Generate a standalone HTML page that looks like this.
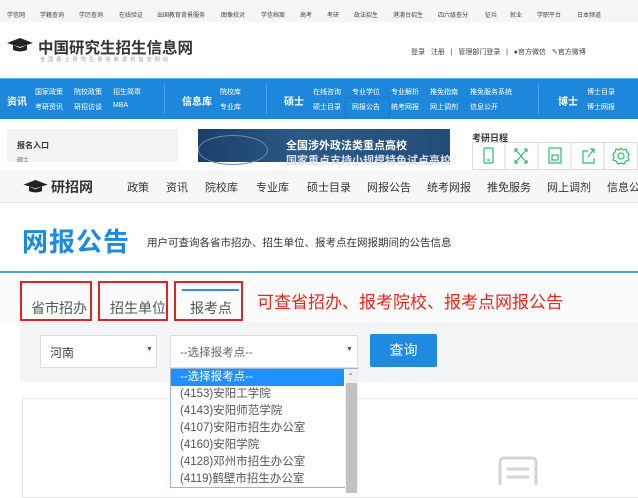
<!DOCTYPE html>
<html><head><meta charset="utf-8"><style>
*{margin:0;padding:0;box-sizing:border-box}
body{width:638px;height:484px;overflow:hidden;background:#fff;font-family:"Liberation Sans","Noto Sans CJK SC",sans-serif;position:relative}
.a{position:absolute;white-space:nowrap}
.t{font-size:6px;color:#444;top:10px}
.bw{color:#fff;font-size:7px}
.cat{color:#fff;font-size:10px;font-weight:bold}
.m{font-size:11px;color:#333;top:179px}
.opt{position:absolute;left:171px;width:173px;height:17px;font-size:11.5px;color:#555;padding-left:9px;line-height:17px}
</style></head><body>
<!-- top strip -->
<div class="a" style="left:0;top:0;width:638px;height:22px;background:#f6f6f6"></div>
<span class="a t" style="left:7px">学信网</span><span class="a t" style="left:40px">学籍查询</span><span class="a t" style="left:79px">学历查询</span><span class="a t" style="left:119px">在线验证</span><span class="a t" style="left:157px">出国教育背景服务</span><span class="a t" style="left:221px">图像校对</span><span class="a t" style="left:261px">学信档案</span><span class="a t" style="left:300px">高考</span><span class="a t" style="left:327px">考研</span><span class="a t" style="left:354px">政法招生</span><span class="a t" style="left:393px">港澳台招生</span><span class="a t" style="left:438px">四六级查分</span><span class="a t" style="left:485px">征兵</span><span class="a t" style="left:510px">就业</span><span class="a t" style="left:537px">学职平台</span><span class="a t" style="left:577px">日本频道</span>
<!-- logo -->
<svg class="a" style="left:7px;top:38px" width="26" height="14" viewBox="0 0 26 14"><path d="M0 5 L13 0 L26 5 L13 9Z" fill="#222"/><path d="M6 7 L6 12 Q13 15 20 12 L20 7 L13 10Z" fill="#222"/></svg>
<span class="a" style="left:38px;top:36px;font-size:15.5px;font-weight:bold;color:#333">中国研究生招生信息网</span>
<span class="a" style="left:40px;top:56px;font-size:5px;color:#999;letter-spacing:3.2px">全国硕士研究生报名和调剂指定网站</span>
<span class="a" style="left:411px;top:47px;font-size:7px;color:#444">登录&nbsp;&nbsp;&nbsp;注册&nbsp;&nbsp;&nbsp;|&nbsp;&nbsp;&nbsp;管理部门登录&nbsp;&nbsp;&nbsp;|&nbsp;&nbsp;&nbsp;●官方微信&nbsp;&nbsp;&nbsp;✎官方微博</span>
<!-- blue bar -->
<div class="a" style="left:0;top:78px;width:638px;height:41px;background:#1d87dc;border-top:1px solid #5ab0ee"></div>
<span class="a cat" style="left:7px;top:93px">资讯</span>
<span class="a bw" style="left:35px;top:87px">国家政策</span><span class="a bw" style="left:74px;top:87px">院校政策</span><span class="a bw" style="left:113px;top:87px">招生简章</span>
<span class="a bw" style="left:35px;top:102px">考研资讯</span><span class="a bw" style="left:74px;top:102px">研招访谈</span><span class="a bw" style="left:113px;top:102px">MBA</span>
<div class="a" style="left:164px;top:84px;width:1px;height:30px;background:#4aa0e4"></div>
<span class="a cat" style="left:182px;top:93px">信息库</span>
<span class="a bw" style="left:220px;top:87px">院校库</span><span class="a bw" style="left:220px;top:102px">专业库</span>
<div class="a" style="left:266px;top:84px;width:1px;height:30px;background:#4aa0e4"></div>
<span class="a cat" style="left:284px;top:93px">硕士</span>
<span class="a bw" style="left:313px;top:87px">在线咨询</span><span class="a bw" style="left:352px;top:87px">专业学位</span><span class="a bw" style="left:391px;top:87px">专业解析</span><span class="a bw" style="left:430px;top:87px">推免指南</span><span class="a bw" style="left:470px;top:87px">推免服务系统</span>
<span class="a bw" style="left:313px;top:102px">硕士目录</span><span class="a bw" style="left:352px;top:102px">网报公告</span><span class="a bw" style="left:391px;top:102px">统考网报</span><span class="a bw" style="left:430px;top:102px">网上调剂</span><span class="a bw" style="left:470px;top:102px">信息公开</span>
<div class="a" style="left:345px;top:97px;width:45px;height:21px;border:1.5px solid #d8343a"></div>
<div class="a" style="left:538px;top:84px;width:1px;height:30px;background:#4aa0e4"></div>
<span class="a cat" style="left:558px;top:93px">博士</span>
<span class="a bw" style="left:587px;top:87px">博士目录</span><span class="a bw" style="left:587px;top:102px">博士网报</span>
<!-- lower top area -->
<div class="a" style="left:7px;top:129px;width:171px;height:33px;background:#f3f3f3"></div>
<span class="a" style="left:17px;top:140px;font-size:8px;font-weight:bold;color:#333">报名入口</span>
<span class="a" style="left:17px;top:155px;font-size:6px;color:#666">硕士</span>
<div class="a" style="left:198px;top:129px;width:252px;height:33px;background:linear-gradient(90deg,#1c3f6a,#2a5a86 40%,#234d78)"></div>
<div class="a" style="left:198px;top:135px;width:70px;height:30px;border-radius:50%;border:1px solid #6a8cb0"></div>
<span class="a" style="left:286px;top:137px;font-size:11px;font-weight:bold;color:#fff">全国涉外政法类重点高校</span>
<span class="a" style="left:286px;top:152px;font-size:11px;font-weight:bold;color:#dde">国家重点支持小规模特色试点高校</span>
<span class="a" style="left:472px;top:131px;font-size:9px;font-weight:bold;color:#333">考研日程</span>
<div class="a" style="left:472px;top:142px;width:166px;height:28px;background:#fff;border:1px solid #ddd"></div>
<svg class="a" style="left:472px;top:142px" width="166" height="28" viewBox="0 0 166 28" fill="none" stroke="#2fbf6a" stroke-width="1.2">
<line x1="33" y1="0" x2="33" y2="28" stroke="#ddd"/><line x1="66" y1="0" x2="66" y2="28" stroke="#ddd"/><line x1="99" y1="0" x2="99" y2="28" stroke="#ddd"/><line x1="132" y1="0" x2="132" y2="28" stroke="#ddd"/>
<rect x="12" y="6" width="9" height="15" rx="1"/><line x1="15" y1="18" x2="18" y2="18"/>
<path d="M43 7 L55 21 M55 7 L43 21 M43 7h3 M43 7v3 M55 7h-3 M55 7v3 M43 21h3 M43 21v-3 M55 21h-3 M55 21v-3"/>
<rect x="77" y="6" width="12" height="15"/><rect x="80" y="13" width="6" height="5"/>
<path d="M116 9 H111 V21 H122 V16 M116 15 L122 7 M118 7 H122 V11"/>
<circle cx="149" cy="14" r="3"/><path d="M149 6 L151 8 L154 7 L155 10 L157 12 L156 15 L157 18 L154 19 L152 22 L149 21 L146 22 L144 19 L141 18 L142 15 L141 12 L143 10 L144 7 L147 8Z"/>
</svg>
<!-- second screenshot -->
<div class="a" style="left:0;top:170px;width:638px;height:33px;background:#f7f7f7;border-bottom:1px solid #e2e2e2"></div>
<svg class="a" style="left:22px;top:180px" width="27" height="13" viewBox="0 0 26 14"><path d="M0 5 L13 0 L26 5 L13 9Z" fill="#222"/><path d="M6 7 L6 12 Q13 15 20 12 L20 7 L13 10Z" fill="#222"/></svg>
<span class="a" style="left:51px;top:177px;font-size:14px;font-weight:bold;color:#333">研招网</span>
<span class="a m" style="left:127px">政策</span><span class="a m" style="left:166px">资讯</span><span class="a m" style="left:205px">院校库</span><span class="a m" style="left:256px">专业库</span><span class="a m" style="left:307px">硕士目录</span><span class="a m" style="left:367px">网报公告</span><span class="a m" style="left:427px">统考网报</span><span class="a m" style="left:487px">推免服务</span><span class="a m" style="left:547px">网上调剂</span><span class="a m" style="left:607px">信息公</span>
<span class="a" style="left:22px;top:222px;font-size:26px;font-weight:bold;color:#1b8be0;letter-spacing:1px">网报公告</span>
<span class="a" style="left:147px;top:235px;font-size:10.5px;color:#333">用户可查询各省市招办、招生单位、报考点在网报期间的公告信息</span>
<div class="a" style="left:0;top:271px;width:638px;height:2px;background:#4ea2dc"></div>
<div class="a" style="left:0;top:273px;width:638px;height:52px;background:#fcfcfc"></div>
<div class="a" style="left:20px;top:281px;width:72px;height:40px;border:2px solid #e0241f"></div>
<div class="a" style="left:98px;top:281px;width:70px;height:40px;border:2px solid #e0241f"></div>
<div class="a" style="left:174px;top:281px;width:69px;height:40px;border:2px solid #e0241f"></div>
<div class="a" style="left:182px;top:289px;width:57px;height:2px;background:#3d8fd0"></div>
<span class="a" style="left:31px;top:298px;font-size:14px;color:#555">省市招办</span>
<span class="a" style="left:110px;top:298px;font-size:14px;color:#555">招生单位</span>
<span class="a" style="left:190px;top:298px;font-size:14px;color:#555">报考点</span>
<span class="a" style="left:257px;top:288px;font-size:17px;color:#f2231b">可查省招办、报考院校、报考点网报公告</span>
<!-- query panel -->
<div class="a" style="left:20px;top:322px;width:618px;height:60px;background:#f4f5f7"></div>
<div class="a" style="left:40px;top:335px;width:117px;height:33px;background:#fff;border:1px solid #ddd"></div>
<span class="a" style="left:50px;top:344px;font-size:12px;color:#444">河南</span>
<span class="a" style="left:146px;top:346px;font-size:7px;color:#555">▼</span>
<div class="a" style="left:170px;top:335px;width:188px;height:33px;background:#fff;border:1px solid #ddd"></div>
<span class="a" style="left:180px;top:344px;font-size:11.5px;color:#666">--选择报考点--</span>
<span class="a" style="left:346px;top:346px;font-size:7px;color:#555">▼</span>
<div class="a" style="left:370px;top:334px;width:67px;height:33px;background:#1f8be0;border-radius:2px;color:#fff;font-size:14px;text-align:center;line-height:33px">查询</div>
<!-- content box -->
<div class="a" style="left:22px;top:398px;width:630px;height:100px;background:#fff;border:1px solid #e6e6e6"></div>
<svg class="a" style="left:497px;top:455px" width="42" height="30" viewBox="0 0 42 30" fill="none" stroke="#d5d5d5" stroke-width="3"><rect x="3" y="3" width="36" height="40" rx="4"/><line x1="10" y1="14" x2="32" y2="14"/><line x1="10" y1="22" x2="32" y2="22"/></svg>
<!-- dropdown list -->
<div class="a" style="left:170px;top:368px;width:188px;height:120px;background:#fff;border:1px solid #9ab4d8"></div>
<div class="a" style="left:345px;top:369px;width:13px;height:120px;background:#f0f0f0"></div>
<div class="a" style="left:346px;top:383px;width:11px;height:110px;background:#c2c2c2"></div>
<span class="a" style="left:348px;top:371px;font-size:5px;color:#999">▲</span>
<div class="opt" style="top:369px;background:#1e90ff;color:#fff">--选择报考点--</div>
<div class="opt" style="top:386px">(4153)安阳工学院</div>
<div class="opt" style="top:403px">(4143)安阳师范学院</div>
<div class="opt" style="top:420px">(4107)安阳市招生办公室</div>
<div class="opt" style="top:437px">(4160)安阳学院</div>
<div class="opt" style="top:454px">(4128)邓州市招生办公室</div>
<div class="opt" style="top:471px">(4119)鹤壁市招生办公室</div>
</body></html>
